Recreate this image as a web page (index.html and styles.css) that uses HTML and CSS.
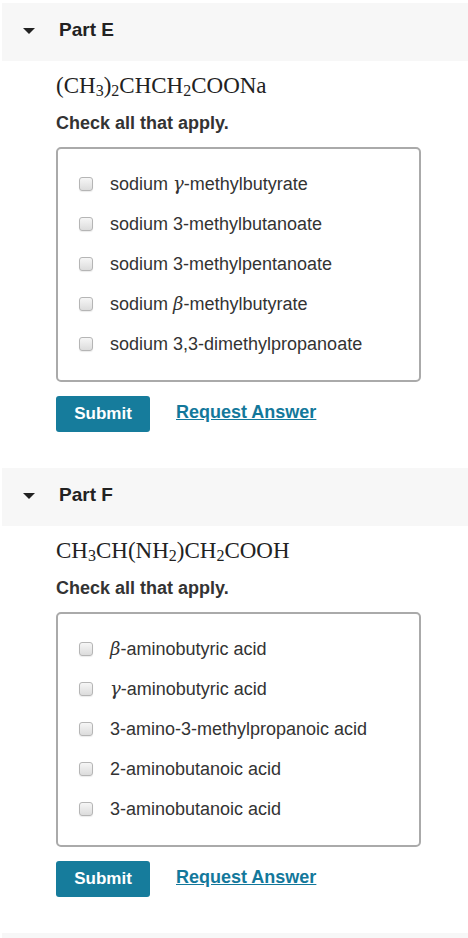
FILE: index.html
```html
<!DOCTYPE html>
<html lang="en">
<head>
    <meta charset="UTF-8">
    <meta name="viewport" content="width=device-width, initial-scale=1.0">
    <title>Parts E and F</title>
    <link rel="stylesheet" href="styles.css">
</head>
<body>
    <div class="part">
        <div class="part-header">
            <span class="caret"></span>
            <span class="part-title">Part E</span>
        </div>
        <div class="part-body">
            <div class="formula">(CH<sub>3</sub>)<sub>2</sub>CHCH<sub>2</sub>COONa</div>
            <div class="prompt">Check all that apply.</div>
            <div class="choices">
                <label class="choice"><input type="checkbox"><span>sodium <i class="greek">γ</i>-methylbutyrate</span></label>
                <label class="choice"><input type="checkbox"><span>sodium 3-methylbutanoate</span></label>
                <label class="choice"><input type="checkbox"><span>sodium 3-methylpentanoate</span></label>
                <label class="choice"><input type="checkbox"><span>sodium <i class="greek">β</i>-methylbutyrate</span></label>
                <label class="choice"><input type="checkbox"><span>sodium 3,3-dimethylpropanoate</span></label>
            </div>
            <div class="actions">
                <button class="submit-button">Submit</button>
                <a href="#" class="request-link">Request Answer</a>
            </div>
        </div>
    </div>

    <div class="part">
        <div class="part-header">
            <span class="caret"></span>
            <span class="part-title">Part F</span>
        </div>
        <div class="part-body">
            <div class="formula">CH<sub>3</sub>CH(NH<sub>2</sub>)CH<sub>2</sub>COOH</div>
            <div class="prompt">Check all that apply.</div>
            <div class="choices">
                <label class="choice"><input type="checkbox"><span><i class="greek">β</i>-aminobutyric acid</span></label>
                <label class="choice"><input type="checkbox"><span><i class="greek">γ</i>-aminobutyric acid</span></label>
                <label class="choice"><input type="checkbox"><span>3-amino-3-methylpropanoic acid</span></label>
                <label class="choice"><input type="checkbox"><span>2-aminobutanoic acid</span></label>
                <label class="choice"><input type="checkbox"><span>3-aminobutanoic acid</span></label>
            </div>
            <div class="actions">
                <button class="submit-button">Submit</button>
                <a href="#" class="request-link">Request Answer</a>
            </div>
        </div>
    </div>

    <div class="part-end"></div>
</body>
</html>
```

FILE: styles.css
```css
body {
    margin: 0;
    padding-top: 3px;
    background-color: #fff;
    color: #333;
    font-family: "Liberation Sans", Arial, sans-serif;
    font-size: 18px;
}
.part {
    height: 465px;
}
.part-header {
    margin-left: 2px;
    height: 58px;
    background-color: #f7f7f7;
    display: flex;
    align-items: center;
}
.part-end {
    margin-left: 2px;
    height: 5px;
    background-color: #f7f7f7;
}
.caret {
    width: 0;
    height: 0;
    margin-left: 21px;
    margin-right: 24px;
    margin-top: -2px;
    border-left: 6px solid transparent;
    border-right: 6px solid transparent;
    border-top: 6px solid #222;
}
.part-title {
    font-weight: bold;
    font-size: 19px;
    color: #222;
    margin-top: -4px;
}
.part-body {
    padding-left: 56px;
    width: 365px;
}
.formula {
    font-family: "Liberation Serif", "Times New Roman", serif;
    font-size: 23px;
    color: #222;
    margin-top: 12px;
    line-height: 26px;
}
.formula sub {
    font-size: 16px;
    vertical-align: -3px;
    line-height: 0;
}
.prompt {
    font-weight: bold;
    margin-top: 13px;
    line-height: 22px;
}
.choices {
    margin-top: 13px;
    border: 2px solid #aaa;
    border-radius: 5px;
    padding: 15px 0 16px;
}
.choice {
    display: flex;
    align-items: center;
    height: 40px;
    padding-left: 21px;
}
.choice input {
    appearance: none;
    -webkit-appearance: none;
    margin: 0 17px 0 0;
    width: 14px;
    height: 14px;
    border: 1px solid #b5b5b5;
    border-radius: 3px;
    background: linear-gradient(#f6f6f6, #dcdcdc);
    box-shadow: 0 1px 1px rgba(0, 0, 0, 0.08);
}
.greek {
    font-family: "DejaVu Serif", "Liberation Serif", serif;
    font-size: 18px;
}
.actions {
    display: flex;
    align-items: center;
    margin-top: 14px;
}
.submit-button {
    width: 94px;
    height: 36px;
    background-color: #167c9c;
    color: #fff;
    border: none;
    border-radius: 3px;
    font-family: "Liberation Sans", Arial, sans-serif;
    font-size: 17px;
    font-weight: bold;
    cursor: pointer;
}
.request-link {
    margin-left: 26px;
    color: #13789b;
    font-weight: bold;
    font-size: 18px;
    margin-top: -4px;
}
```
